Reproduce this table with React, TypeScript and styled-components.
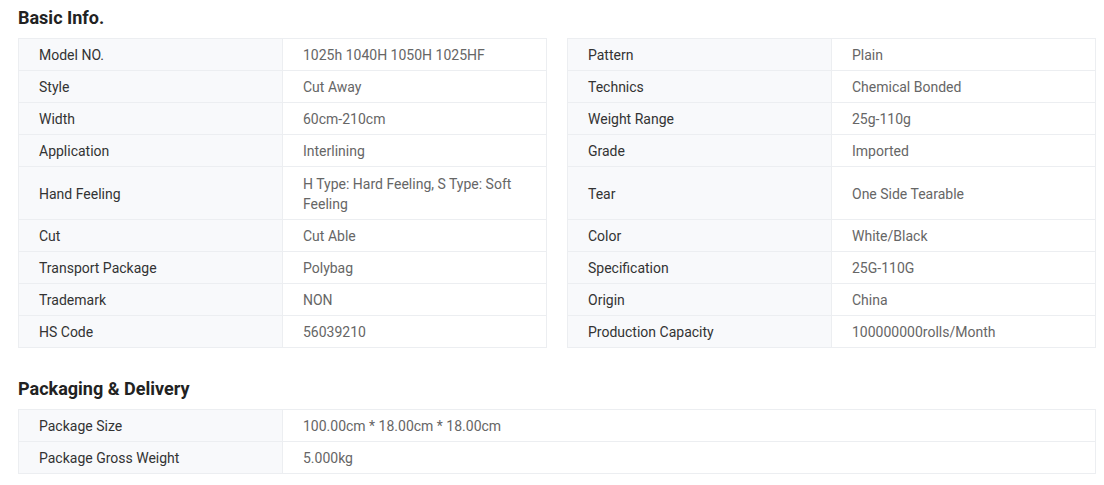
import React from "react";
import styled, { createGlobalStyle } from "styled-components";

const Global = createGlobalStyle`
  html, body { margin: 0; padding: 0; background: #fff; }
  body { font-family: Roboto, "Noto Sans", Arial, sans-serif; }
`;

const Page = styled.div`
  padding: 6px 8px 0 18px;
  width: 1078px;
`;

const Title = styled.h2`
  margin: 0;
  font-size: 18px;
  line-height: 24px;
  font-weight: 700;
  color: #222;
  padding: 0 0 8px 0;
`;

const Section = styled.section<{ $gap?: number }>`
  margin-bottom: ${(p) => p.$gap ?? 0}px;
`;

const Columns = styled.div`
  display: grid;
  grid-template-columns: 529px 529px;
  column-gap: 20px;
  align-items: start;
`;

const Table = styled.div`
  border: 1px solid #eceef1;
  border-bottom: none;
`;

const Row = styled.div<{ $labelWidth: number }>`
  display: grid;
  grid-template-columns: ${(p) => p.$labelWidth}px 1fr;
  border-bottom: 1px solid #eceef1;
`;

const TwoLineRow = styled(Row)`
  min-height: 52px;
`;

const Label = styled.div`
  background: #f8f9fb;
  border-right: 1px solid #eceef1;
  padding: 6px 20px 5px 20px;
  font-size: 14px;
  line-height: 20px;
  color: #333;
  display: flex;
  align-items: center;
`;

const Value = styled.div`
  padding: 6px 20px 5px 20px;
  font-size: 14px;
  line-height: 20px;
  color: #666;
  display: flex;
  align-items: center;
`;

const left: [string, string][] = [
  ["Model NO.", "1025h 1040H 1050H 1025HF"],
  ["Style", "Cut Away"],
  ["Width", "60cm-210cm"],
  ["Application", "Interlining"],
  ["Hand Feeling", "H Type: Hard Feeling, S Type: Soft Feeling"],
  ["Cut", "Cut Able"],
  ["Transport Package", "Polybag"],
  ["Trademark", "NON"],
  ["HS Code", "56039210"],
];

const right: [string, string][] = [
  ["Pattern", "Plain"],
  ["Technics", "Chemical Bonded"],
  ["Weight Range", "25g-110g"],
  ["Grade", "Imported"],
  ["Tear", "One Side Tearable"],
  ["Color", "White/Black"],
  ["Specification", "25G-110G"],
  ["Origin", "China"],
  ["Production Capacity", "100000000rolls/Month"],
];

const pack: [string, string][] = [
  ["Package Size", "100.00cm * 18.00cm * 18.00cm"],
  ["Package Gross Weight", "5.000kg"],
];

function DataTable({ rows, labelWidth }: { rows: [string, string][]; labelWidth: number }) {
  return (
    <Table>
      {rows.map(([k, v], i) => {
        const R = i === 4 && rows.length === 9 ? TwoLineRow : Row;
        return (
          <R key={k} $labelWidth={labelWidth}>
            <Label>{k}</Label>
            <Value>{v}</Value>
          </R>
        );
      })}
    </Table>
  );
}

export default function App() {
  return (
    <>
      <Global />
      <Page>
        <Section $gap={29}>
          <Title>Basic Info.</Title>
          <Columns>
            <DataTable rows={left} labelWidth={264} />
            <DataTable rows={right} labelWidth={264} />
          </Columns>
        </Section>
        <Section>
          <Title>Packaging &amp; Delivery</Title>
          <DataTable rows={pack} labelWidth={264} />
        </Section>
      </Page>
    </>
  );
}
